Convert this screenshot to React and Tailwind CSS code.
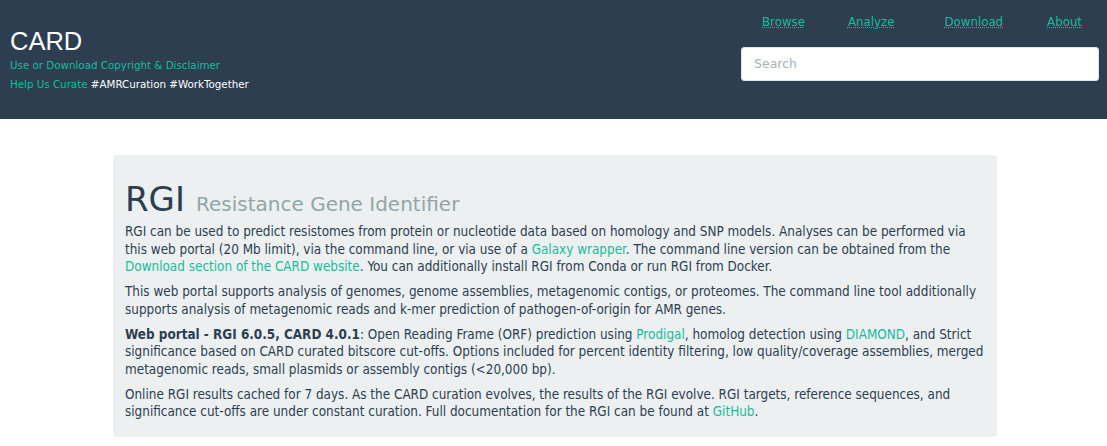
export default function App() {
  const link = "text-[#18bc9c]";
  return (
    <div className="min-h-[446px] bg-white font-['DejaVu_Sans',Verdana,sans-serif] text-[#2c3e50]">
      {/* Header */}
      <div className="h-[119px] bg-[#2c3e50] flex justify-between">
        <div className="pl-[10px] pt-[26px]">
          <div className="font-['Liberation_Sans',Arial,sans-serif] text-[25.5px] leading-[30px] text-white">
            CARD
          </div>
          <div className="mt-[2px] text-[10.3px] leading-[14px] text-[#18bc9c]">
            Use or Download Copyright &amp; Disclaimer
          </div>
          <div className="mt-[5px] text-[10.3px] leading-[14px]">
            <span className="text-[#18bc9c]">Help Us Curate</span>
            <span className="text-white"> #AMRCuration #WorkTogether</span>
          </div>
        </div>
        <div className="w-[366px] pr-[8px] pt-[13px] flex flex-col items-end">
          <div className="flex w-[358px] text-[11.8px] leading-[18px]">
            <a className={`${link} underline decoration-dotted ml-[21px]`}>Browse</a>
            <a className={`${link} underline decoration-dotted ml-[43px]`}>Analyze</a>
            <a className={`${link} underline decoration-dotted ml-[50px]`}>Download</a>
            <a className={`${link} underline decoration-dotted ml-[44px]`}>About</a>
          </div>
          <div className="mt-[16px] w-[358px] h-[34px] bg-white rounded-[3px] border border-[#dce4ec] flex items-center px-[12px] text-[12.5px] text-[#a7b1bb]">
            Search
          </div>
        </div>
      </div>

      {/* Card */}
      <div className="pt-[36px]">
        <div className="w-[884px] ml-[113px] bg-[#ecf0f1] rounded-[4px] px-[12px] pt-[24px] pb-[16px] text-[13.4px] leading-[17.5px]">
          <h1 className="mb-[4px] flex items-baseline">
            <span className="text-[34px] leading-[40px] text-[#2c3e50]">RGI</span>
            <span className="ml-[11px] text-[20px] text-[#95a5a6]">Resistance Gene Identifier</span>
          </h1>
          <div className="font-['DejaVu_Sans_Condensed','DejaVu_Sans',sans-serif] font-stretch-condensed">
            <p className="mb-[7.5px]">
              RGI can be used to predict resistomes from protein or nucleotide data based on homology and SNP models. Analyses can be performed via this web portal (20 Mb limit), via the command line, or via use of a{" "}
              <a className={link}>Galaxy wrapper</a>. The command line version can be obtained from the{" "}
              <a className={link}>Download section of the CARD website</a>. You can additionally install RGI from Conda or run RGI from Docker.
            </p>
            <p className="mb-[7.5px]">
              This web portal supports analysis of genomes, genome assemblies, metagenomic contigs, or proteomes. The command line tool additionally supports analysis of metagenomic reads and k-mer prediction of pathogen-of-origin for AMR genes.
            </p>
            <p className="mb-[7.5px]">
              <b>Web portal - RGI 6.0.5, CARD 4.0.1</b>: Open Reading Frame (ORF) prediction using{" "}
              <a className={link}>Prodigal</a>, homolog detection using <a className={link}>DIAMOND</a>, and Strict significance based on CARD curated bitscore cut-offs. Options included for percent identity filtering, low quality/coverage assemblies, merged metagenomic reads, small plasmids or assembly contigs (&lt;20,000 bp).
            </p>
            <p>
              Online RGI results cached for 7 days. As the CARD curation evolves, the results of the RGI evolve. RGI targets, reference sequences, and significance cut-offs are under constant curation. Full documentation for the RGI can be found at{" "}
              <a className={link}>GitHub</a>.
            </p>
          </div>
        </div>
      </div>
    </div>
  );
}
